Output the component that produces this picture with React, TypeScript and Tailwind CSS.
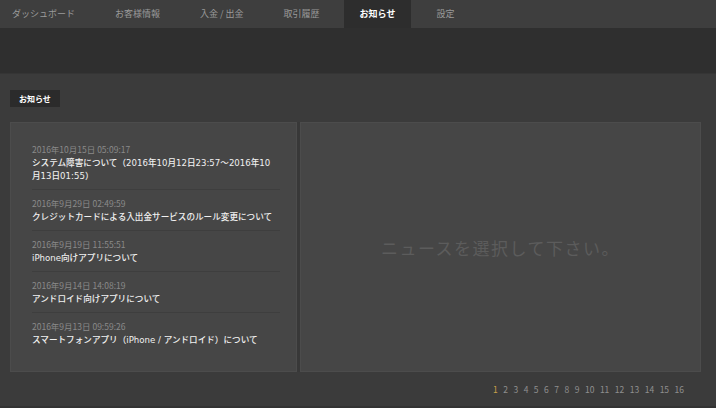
const tabs = ['ダッシュボード', 'お客様情報', '入金 / 出金', '取引履歴', 'お知らせ', '設定'];

const news = [
  { date: '2016年10月15日 05:09:17', title: 'システム障害について（2016年10月12日23:57〜2016年10月13日01:55）' },
  { date: '2016年9月29日 02:49:59', title: 'クレジットカードによる入出金サービスのルール変更について' },
  { date: '2016年9月19日 11:55:51', title: 'iPhone向けアプリについて' },
  { date: '2016年9月14日 14:08:19', title: 'アンドロイド向けアプリについて' },
  { date: '2016年9月13日 09:59:26', title: 'スマートフォンアプリ（iPhone / アンドロイド）について' },
];

const pages = Array.from({ length: 16 }, (_, i) => i + 1);

export default function App() {
  return (
    <div
      className="w-[716px] h-[408px] bg-[#3b3b3b] flex flex-col overflow-hidden"
      style={{ fontFamily: '"Noto Sans CJK JP", "Noto Sans", sans-serif' }}
    >
      {/* Top nav */}
      <nav className="h-[28px] bg-[#3e3e3e] flex items-stretch pl-[12px]">
        {tabs.map((t, i) =>
          t === 'お知らせ' ? (
            <div
              key={t}
              className="bg-[#2d2d2d] text-white font-bold text-[9px] flex items-center px-[16px] ml-[4px] mr-[5px]"
            >
              {t}
            </div>
          ) : (
            <div
              key={t}
              className={`text-[#9a9a9a] text-[9px] flex items-center ${i === 0 ? 'pr-[20px]' : 'px-[20px]'}`}
            >
              {t}
            </div>
          )
        )}
      </nav>

      {/* Header band */}
      <div className="h-[46px] bg-[#2f2f2f] border-b border-[#353535]" />

      {/* Main */}
      <main className="flex-1 flex flex-col px-[10px] pt-[16px] border-b-2 border-[#333333]">
        <div className="self-start bg-[#2b2b2b] text-white font-bold text-[8px] px-[9px] h-[17px] flex items-center">
          お知らせ
        </div>

        <div className="mt-[15px] flex h-[250px] w-[691px]">
          {/* News list */}
          <div className="w-[287px] bg-[#464646] border border-[#4c4c4c] pt-[13px] pl-[21px] pr-[16px]">
            {news.map((n, i) => (
              <div
                key={n.date}
                className={`pt-[7px] pb-[6px] ${i < news.length - 1 ? 'border-b border-[#3e3e3e]' : ''}`}
              >
                <div className="text-[8.5px] leading-[12px] text-[#8a8a8a]">{n.date}</div>
                <div
                  className="mt-[2px] pr-[4px] text-[8.6px] leading-[13px] text-[#f0f0f0] font-medium"
                  style={{ fontFamily: '"DejaVu Sans", "Noto Sans CJK JP", sans-serif' }}
                >
                  {n.title}
                </div>
              </div>
            ))}
          </div>

          <div className="w-[3px] bg-[#383838]" />

          {/* Detail */}
          <div className="flex-1 bg-[#464646] border border-[#4c4c4c] flex items-center justify-center">
            <span className="text-[17px] text-[#5c5c5c] tracking-[1.5px] pt-[2px]">ニュースを選択して下さい。</span>
          </div>
        </div>

        {/* Pagination */}
        <div className="flex-1 flex items-center justify-end pr-[22px] gap-[5.5px] text-[8.5px] text-[#8f8f8f]">
          {pages.map((p) => (
            <span key={p} className={p === 1 ? 'text-[#c9a24a]' : ''}>
              {p}
            </span>
          ))}
        </div>
      </main>
    </div>
  );
}
